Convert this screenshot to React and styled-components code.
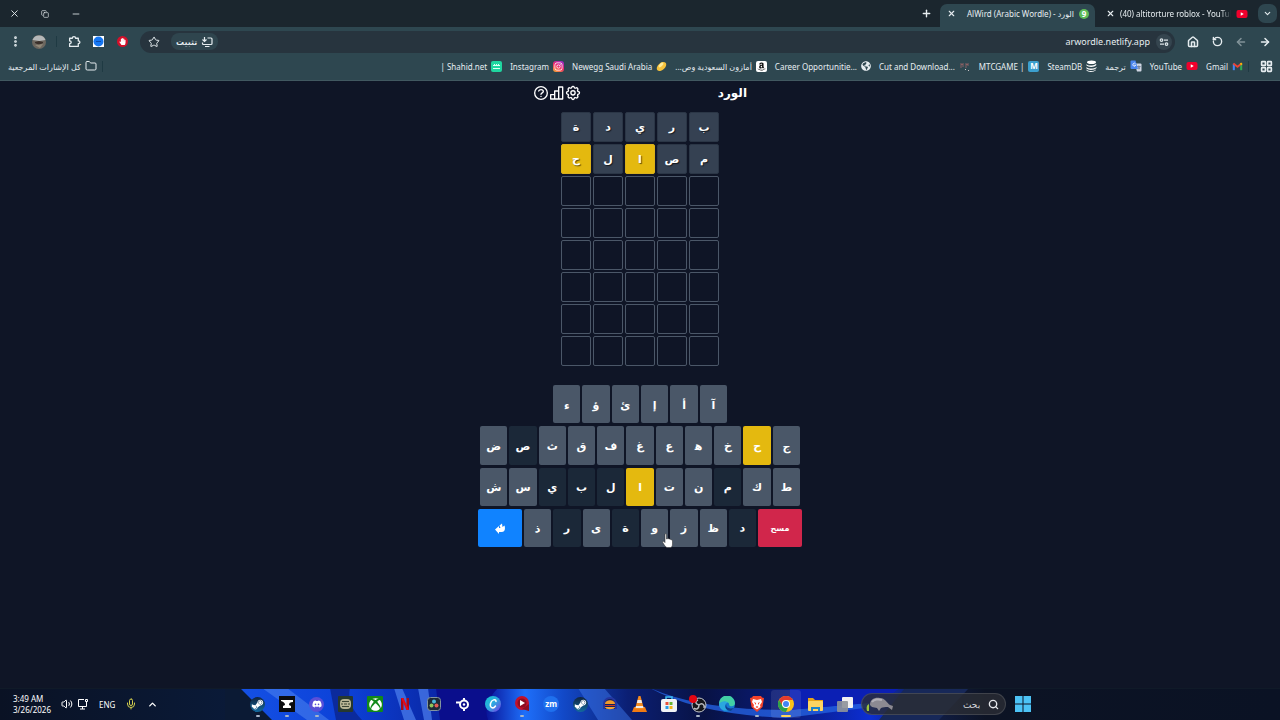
import React from 'react';
import styled, { createGlobalStyle } from 'styled-components';
import {
  ArrowLeft,
  ArrowRight,
  ChevronDown,
  ChevronUp,
  Copy,
  EllipsisVertical,
  Folder,
  House,
  LayoutGrid,
  Mic,
  Minus,
  Plus,
  RotateCcw,
  Search,
  Star,
  Volume2,
  X,
} from 'lucide-react';
import {
  FaAmazon,
  FaDiscord,
  FaGlobeAmericas,
  FaInstagram,
  FaSteamSymbol,
  FaXbox,
  FaHandPaper,
} from 'react-icons/fa';

const GlobalStyle = createGlobalStyle`
  * {
    box-sizing: border-box;
  }
  body {
    margin: 0;
    background: #0f1526;
    color: #e6edf0;
    font-family: 'Noto Sans', 'Open Sans', 'DejaVu Sans', sans-serif;
    font-size: 8px;
  }
  button,
  input {
    margin: 0;
    padding: 0;
    border: 0;
    background: none;
    color: inherit;
    font: inherit;
  }
  a {
    color: inherit;
    text-decoration: none;
  }
  svg {
    display: block;
    flex-shrink: 0;
  }
`;

const Screen = styled.div`
  display: flex;
  flex-direction: column;
  min-height: 100vh;
`;

/* browser */
const TabStrip = styled.div`
  display: flex;
  align-items: center;
  gap: 4px;
  height: 27px;
  padding-right: 3px;
  background: #1b262e;
`;
const TabMenu = styled.button`
  display: grid;
  place-items: center;
  width: 19px;
  height: 19px;
  border-radius: 7px;
  background: #2e464f;
`;
const Tab = styled.div`
  display: flex;
  align-items: center;
  gap: 5px;
  align-self: flex-end;
  width: 155px;
  height: 23px;
  padding: 0 6px 4px;
  border-radius: 7px 7px 0 0;
  background: ${p => (p.$active ? '#2e4750' : 'transparent')};
`;
const TabTitle = styled.button`
  flex: 1;
  min-width: 0;
  direction: ltr;
  text-align: ${p => (p.$fade ? 'left' : 'right')};
  white-space: nowrap;
  mask-image: ${p =>
    p.$fade ? 'linear-gradient(to left, transparent, #000 10px)' : 'none'};
`;
const IconButton = styled.button`
  display: grid;
  place-items: center;
  flex-shrink: 0;
  width: ${p => p.$width || 24}px;
  height: 20px;
  opacity: ${p => (p.$dim ? 0.45 : 1)};
`;
const CloseButton = styled.button`
  display: grid;
  place-items: center;
  width: 10px;
  height: 12px;
`;
const WindowControls = styled.div`
  display: flex;
  margin-right: auto;
`;
const Toolbar = styled.div`
  display: flex;
  align-items: center;
  height: 30px;
  padding: 0 3px 1px;
  background: #2e4750;
`;
const Omnibox = styled.div`
  display: flex;
  flex: 1;
  align-items: center;
  gap: 6px;
  height: 22px;
  margin: 0 6px;
  padding: 0 3px;
  border-radius: 11px;
  background: #27343e;
`;
const SiteInfo = styled.button`
  display: grid;
  place-items: center;
  width: 16px;
  height: 16px;
  border-radius: 8px;
  background: #35454f;
`;
const Address = styled.input`
  flex: 1;
  direction: ltr;
  text-align: right;
  font-size: 9px;
  outline: none;
`;
const InstallButton = styled.button`
  display: flex;
  align-items: center;
  gap: 4px;
  height: 17px;
  padding: 0 5px;
  border-radius: 8px;
  background: #2f454e;
  font-weight: 600;
`;
const Divider = styled.span`
  width: 1px;
  height: 11px;
  margin: 0 5px;
  background: #1f3a43;
`;
const BookmarksBar = styled.nav`
  display: flex;
  align-items: center;
  height: 24px;
  padding: 0 2px 5px 8px;
  border-bottom: 1px solid #415860;
  background: #2e4750;
  white-space: nowrap;
`;
const BookmarkList = styled.div`
  display: flex;
  flex: 1;
  gap: 8px;
`;
const Bookmark = styled.a`
  display: flex;
  align-items: center;
  gap: 4px;
`;
const Badge = styled.span`
  display: grid;
  place-items: center;
  flex-shrink: 0;
  width: ${p => p.$size || 11}px;
  height: ${p => p.$size || 11}px;
  border-radius: ${p => p.$radius ?? 2}px;
  background: ${p => p.$bg || 'transparent'};
  color: ${p => p.$color || '#fff'};
  font-size: 8px;
  font-weight: 700;
  line-height: 1;
`;

/* game */
const Game = styled.main`
  display: flex;
  flex: 1;
  flex-direction: column;
  align-items: center;
  padding-top: 2px;
  font-family: 'DejaVu Sans', sans-serif;
  font-weight: 700;
  color: #fff;
`;
const GameHeader = styled.header`
  display: flex;
  align-items: center;
  justify-content: space-between;
  width: 214px;
  height: 20px;
`;
const GameTitle = styled.h1`
  margin: 0;
  font-size: 12px;
  line-height: 20px;
`;
const GameActions = styled.div`
  display: flex;
  button {
    width: 16px;
    height: 16px;
  }
`;
const Board = styled.div`
  display: grid;
  grid-template-columns: repeat(5, 30px);
  grid-auto-rows: 30px;
  gap: 2px;
  margin-top: 9px;
`;
const tileColors = { absent: '#354152', present: '#e4b90f' };
const Tile = styled.div`
  display: grid;
  place-items: center;
  border: 1px solid ${p => (p.$state ? '#2b3646' : '#4b5768')};
  border-radius: 2px;
  background: ${p => tileColors[p.$state] || 'transparent'};
  border-color: ${p => p.$state === 'present' && '#d9b01a'};
  font-size: 11px;
  text-shadow: 1px 1px 1px #0009;
`;
const Keyboard = styled.div`
  position: relative;
  display: grid;
  grid-auto-rows: 1fr;
  justify-items: center;
  gap: 3px;
  height: 162px;
  margin-top: 19px;
`;
const KeyRow = styled.div`
  display: flex;
  gap: 2px;
  width: ${p => p.$width}px;
`;
const keyColors = {
  idle: '#4a5768',
  absent: '#1b2838',
  present: '#e4b90f',
  enter: '#1083ff',
  erase: '#d1264b',
};
const Key = styled.button`
  display: grid;
  place-items: center;
  flex: ${p => (p.$wide ? '0 0 44px' : '1')};
  padding-top: 2px;
  border-radius: 2px;
  background: ${p => keyColors[p.$state]};
  font-size: ${p => (p.$wide ? 8 : 11)}px;
  font-weight: 700;
`;
const Pointer = styled.svg`
  position: absolute;
  left: 184px;
  top: 148px;
`;

/* taskbar */
const Taskbar = styled.footer`
  position: relative;
  display: flex;
  align-items: center;
  height: 32px;
  overflow: hidden;
  background: #0a1224;
`;
const Wallpaper = styled.svg`
  position: absolute;
  inset: 0;
  width: 100%;
  height: 100%;
`;
const Tray = styled.div`
  position: relative;
  display: flex;
  align-items: center;
  gap: 10px;
  width: 19%;
  padding-left: 13px;
  color: #fff;
`;
const Clock = styled.time`
  line-height: 11px;
`;
const TrayGroup = styled.span`
  display: flex;
  gap: 4px;
`;
const Apps = styled.div`
  position: relative;
  display: grid;
  grid-template-columns: repeat(21, 1fr);
  width: 616px;
`;
const AppButton = styled.button`
  position: relative;
  display: grid;
  place-items: center;
  height: 28px;
  border-radius: 3px;
  background: ${p => (p.$active ? '#ffffff18' : 'transparent')};
  &::after {
    content: '';
    position: absolute;
    bottom: 1px;
    width: ${p => (p.$active ? 10 : 4)}px;
    height: 2px;
    border-radius: 1px;
    background: ${p =>
      p.$active ? '#ffd65a' : p.$open ? '#a9b6c8' : 'transparent'};
  }
`;
const StartArea = styled.div`
  position: relative;
  display: flex;
  flex: 1;
  align-items: center;
  gap: 9px;
  padding-left: 2px;
`;
const SearchBox = styled.label`
  display: flex;
  align-items: center;
  gap: 8px;
  width: 145px;
  height: 22px;
  padding: 0 6px 0 4px;
  border: 1px solid #ffffff20;
  border-radius: 11px;
  background: #2a2d34cc;
  input {
    flex: 1;
    min-width: 0;
    font-size: 9px;
    outline: none;
  }
  input::placeholder {
    color: #d4d7dc;
    opacity: 1;
  }
`;

const YouTubeIcon = () => (
  <svg width="12" height="12" viewBox="0 0 24 24">
    <rect x="1" y="4" width="22" height="16" rx="4" fill="#f0002c" />
    <path d="M9.5 8.5v7l6-3.5z" fill="#fff" />
  </svg>
);
const GmailIcon = () => (
  <svg width="11" height="11" viewBox="0 0 24 24" fill="none" strokeWidth="4.5">
    <path d="M4 20V6" stroke="#4285f4" />
    <path d="M20 20V6" stroke="#34a853" />
    <path d="M3 5.5l9 7 9-7" stroke="#ea4335" />
    <path d="M18.5 7.5L21.5 5" stroke="#fbbc04" />
  </svg>
);
const TranslateIcon = () => (
  <svg width="12" height="12" viewBox="0 0 24 24">
    <path d="M9 7h12a2 2 0 012 2v12a2 2 0 01-2 2h-7z" fill="#cfd6e2" />
    <path
      d="M14 13h7M17.500 11v2M20 13c-1 3-2 4-4 5M16 14c1 2 2 3 4 4"
      stroke="#5c6b88"
      strokeWidth="1.400"
      fill="none"
    />
    <path d="M3 1h8l5 17H3a2 2 0 01-2-2V3a2 2 0 012-2z" fill="#4b86f0" />
    <path
      d="M11 7.500a3 3 0 10.500 3H8.500"
      stroke="#fff"
      strokeWidth="1.600"
      fill="none"
    />
  </svg>
);
const SteamDbIcon = () => (
  <svg width="11" height="12" viewBox="0 0 22 24" fill="#fff">
    <ellipse cx="11" cy="4.500" rx="9" ry="3.500" />
    <path d="M1 8c2 4 13 4 19 0l1 2c-4 5-16 5-20 1zM1 14c4 4 15 4 20 0v2c-4 5-17 5-20 1zM1 19c4 4 14 4 19 0v1c-4 5-16 5-19 1z" />
  </svg>
);
const PixelIcon = () => (
  <svg width="12" height="11" viewBox="0 0 12 11">
    <path d="M1 2h4v4H3v1H1zM6 2h4v3H8v2H6z" fill="#59535a" />
    <path d="M2 3h2v1H2zM7 3h2v1H7z" fill="#8c5f62" />
    <path d="M6 8h1v1H6zM9 9h1v1H9z" fill="#c9c4c8" />
  </svg>
);
const EggIcon = () => (
  <svg width="11" height="11" viewBox="0 0 22 22">
    <ellipse cx="11" cy="11" rx="11" ry="7" fill="#f5c23c" transform="rotate(-42 11 11)" />
    <ellipse cx="10" cy="8" rx="6" ry="3" fill="#ffeb9a" transform="rotate(-42 10 8)" />
  </svg>
);
const TuneIcon = () => (
  <svg width="10" height="10" viewBox="0 0 20 20" fill="none" stroke="#dbe4e8" strokeWidth="2.500">
    <circle cx="5" cy="6" r="2.500" />
    <path d="M10 6h8M2 14h8" />
    <circle cx="15" cy="14" r="2.500" />
  </svg>
);
const InstallIcon = () => (
  <svg width="12" height="12" viewBox="0 0 24 24" fill="none" stroke="currentColor" strokeWidth="2.400">
    <path d="M13 4h7a2 2 0 012 2v9a2 2 0 01-2 2H5a2 2 0 01-2-2v-2M8 21h9" />
    <path d="M7 2v8M3 7l4 4 4-4" />
  </svg>
);
const ExtensionsIcon = () => (
  <svg width="13" height="13" viewBox="0 0 24 24" fill="none" stroke="currentColor" strokeWidth="2.400" strokeLinejoin="round">
    <path d="M3 6h5c0-4 6-4 6 0h5v5c4 0 4 5 0 5v5H3v-5c4 0 4-5 0-5z" />
  </svg>
);
const AvatarIcon = () => (
  <svg width="14" height="14" viewBox="0 0 14 14">
    <circle cx="7" cy="7" r="7" fill="#6c675f" />
    <path d="M.5 5a7 7 0 0113 0l-6 1z" fill="#b5b8b9" />
    <path d="M3 7l4-1 4 1v1l-4 2-4-2z" fill="#3a302b" />
    <path d="M3 10l8-1-3 4z" fill="#918878" />
  </svg>
);
const HelpIcon = () => (
  <svg width="16" height="16" viewBox="0 0 24 24" fill="none" stroke="#fff" strokeWidth="2" strokeLinecap="round">
    <circle cx="12" cy="12" r="9.500" />
    <path d="M8.500 9c.6-1.400 2-2 3.500-2 2 0 3.500 1.200 3.500 2.800 0 2-3.500 2-3.500 4.200M12 17v.1" />
  </svg>
);
const StatsIcon = () => (
  <svg width="16" height="16" viewBox="0 0 24 24" fill="none" stroke="#fff" strokeWidth="2" strokeLinejoin="round">
    <path d="M2.500 14.500h6V21h-6zM8.500 9h6v12h-6zM14.500 3h6v18h-6z" />
  </svg>
);
const GearIcon = () => (
  <svg width="16" height="16" viewBox="0 0 24 24" fill="none" stroke="#fff" strokeWidth="2" strokeLinejoin="round">
    <path d="M10.300 3.300c.4-1.800 3-1.800 3.400 0a1.800 1.800 0 002.800 1.100c1.500-1 3.600 1 2.700 2.700a1.800 1.800 0 001.200 2.900c1.800.4 1.800 3.200 0 3.600a1.800 1.800 0 00-1.200 2.900c.9 1.500-1.200 3.600-2.700 2.700a1.800 1.800 0 00-2.800 1.200c-.4 1.800-3 1.800-3.400 0a1.800 1.800 0 00-2.800-1.200c-1.500.9-3.600-1.200-2.700-2.700a1.800 1.800 0 00-1.200-2.900c-1.800-.4-1.800-3.200 0-3.600a1.800 1.800 0 001.200-2.900c-.9-1.700 1.200-3.700 2.700-2.700a1.800 1.800 0 002.800-1.100z" />
    <circle cx="12" cy="11.800" r="3.200" />
  </svg>
);
const EnterIcon = () => (
  <svg width="10" height="11" viewBox="0 0 20 22" fill="#fff">
    <path d="M0 13l8-7v4h3L9 5l5-4 1 7 4-3c2 6 1 13-6 13H8v4z" />
  </svg>
);
const SteamIcon = () => (
  <Badge $size={15} $radius={8} $bg="linear-gradient(#10243f, #136a9e)">
    <FaSteamSymbol size={13} />
  </Badge>
);

const bookmarks = [
  { text: 'Gmail', icon: <GmailIcon /> },
  { text: 'YouTube', icon: <YouTubeIcon /> },
  { text: 'ترجمة', icon: <TranslateIcon /> },
  { text: 'SteamDB', icon: <SteamDbIcon /> },
  { text: 'MTCGAME |', icon: <Badge $bg="#3c9fce">M</Badge> },
  { text: 'Cut and Download...', icon: <PixelIcon /> },
  { text: 'Career Opportunitie...', icon: <FaGlobeAmericas size={10} /> },
  {
    text: 'أمازون السعودية وص...',
    rtl: true,
    icon: (
      <Badge $bg="#fff" $color="#111">
        <FaAmazon size={9} />
      </Badge>
    ),
  },
  { text: 'Newegg Saudi Arabia', icon: <EggIcon /> },
  {
    text: 'Instagram',
    icon: (
      <Badge $radius={3} $bg="linear-gradient(210deg, #8a2bd8, #ee2a6b 50%, #fdb52f)">
        <FaInstagram size={9} />
      </Badge>
    ),
  },
  {
    text: '| Shahid.net',
    icon: (
      <Badge $bg="#1fd6a0">
        <svg width="7" height="7" viewBox="0 0 7 7" stroke="#d9fff3">
          <path d="M0 2.500h7M0 5.500h7M1.500 1v2M3.500 1v2M5.500 1v2" />
        </svg>
      </Badge>
    ),
  },
];

const guesses = [
  ['ب', 'ر', 'ي', 'د', 'ة'],
  ['م', 'ص', 'ا', 'ل', 'ح'],
];
const boardRows = 8;
const present = 'اح';
const absent = 'بريدةمصل';

// the joiner gives heh its initial shape
const keyRows = [
  { width: 174, keys: 'آ أ إ ئ ؤ ء' },
  { width: 320, keys: 'ج ح خ ه\u200d ع غ ف ق ث ص ض' },
  { width: 320, keys: 'ط ك م ن ت ا ل ب ي س ش' },
  { width: 324, keys: 'د ظ ز و ة ى ر ذ', actions: true },
];

const letterState = (letter, other) => {
  if (present.includes(letter)) return 'present';
  return absent.includes(letter) ? 'absent' : other;
};

const apps = [
  { name: 'Steam', open: true, icon: <SteamIcon /> },
  {
    name: 'Anvil',
    open: true,
    icon: (
      <svg width="16" height="16" viewBox="0 0 16 16">
        <rect width="16" height="16" fill="#0b0c0f" />
        <path d="M2 4h12v2c-3 0-4 1-4 3l2 1v2H4v-2l2-1c0-2-1-3-4-4z" fill="#fff" />
      </svg>
    ),
  },
  {
    name: 'Discord',
    open: true,
    icon: (
      <Badge $size={15} $radius={8} $bg="#5a4fd8">
        <FaDiscord size={10} />
      </Badge>
    ),
  },
  {
    name: 'Game',
    icon: (
      <svg width="15" height="16" viewBox="0 0 15 16">
        <rect width="15" height="16" rx="1" fill="#26382f" />
        <rect x="2" y="3" width="11" height="10" rx="4" fill="#b6b493" />
        <path d="M4 5.500h7M3 8h2M6 8h3M10 8h2M4 10.500h7" stroke="#3a4633" />
      </svg>
    ),
  },
  {
    name: 'Xbox',
    icon: (
      <Badge $size={16} $radius={1} $bg="#128a19">
        <FaXbox size={13} />
      </Badge>
    ),
  },
  {
    name: 'Netflix',
    icon: (
      <svg width="8" height="12" viewBox="0 0 8 12">
        <path d="M0 0h2.500v12H0zM5.500 0H8v12H5.500z" fill="#a90712" />
        <path d="M0 0h2.500L8 12H5.500z" fill="#e50914" />
      </svg>
    ),
  },
  {
    name: 'Resolve',
    icon: (
      <svg width="14" height="14" viewBox="0 0 14 14">
        <rect x=".5" y=".5" width="13" height="13" rx="3" fill="#1e2a36" stroke="#8295a0" />
        <circle cx="7" cy="4.500" r="2" fill="#4bb7d8" />
        <circle cx="4.500" cy="8.500" r="2" fill="#8fc45b" />
        <circle cx="9.500" cy="8.500" r="2" fill="#e25b54" />
      </svg>
    ),
  },
  {
    name: 'SteelSeries',
    icon: (
      <svg width="14" height="14" viewBox="0 0 14 14" fill="none" stroke="#fff" strokeWidth="2">
        <circle cx="8" cy="7.500" r="4" />
        <circle cx="8" cy="7.500" r="1.200" fill="#fff" stroke="none" />
        <path d="M8 1v3M8 11v3M0 5.500h4" />
      </svg>
    ),
  },
  {
    name: 'Canva',
    icon: (
      <svg width="16" height="16" viewBox="0 0 16 16">
        <defs>
          <linearGradient id="canva" x2="1" y2="1">
            <stop stopColor="#12c6d2" />
            <stop offset=".5" stopColor="#2fa8e0" />
            <stop offset="1" stopColor="#7b33e6" />
          </linearGradient>
        </defs>
        <circle cx="8" cy="8" r="8" fill="url(#canva)" />
        <path
          d="M11 5.500c0-3-4.500-2-5.500 2s2.500 6 5 2.500"
          fill="none"
          stroke="#fff"
          strokeWidth="1.500"
          strokeLinecap="round"
        />
      </svg>
    ),
  },
  {
    name: 'Video',
    open: true,
    icon: (
      <svg width="16" height="16" viewBox="0 0 16 16">
        <circle cx="8" cy="7" r="7" fill="#c3122c" />
        <path d="M8 13l7-5v7z" fill="#8d0e22" />
        <circle cx="8" cy="7" r="4.500" fill="#8d0e22" />
        <path d="M6 4v6l5-3z" fill="#fff" />
      </svg>
    ),
  },
  {
    name: 'Zoom',
    icon: (
      <Badge $size={16} $radius={8} $bg="#1f70ee">
        zm
      </Badge>
    ),
  },
  { name: 'Steam', icon: <SteamIcon /> },
  {
    name: 'Burger',
    icon: (
      <svg width="16" height="14" viewBox="0 0 16 14">
        <path d="M2 12V7a6 6 0 0112 0v5" fill="#14205e" stroke="#2536a0" strokeWidth="2" />
        <path d="M3 7c0-5 10-5 10 0z" fill="#f09a2c" />
        <path d="M3 8h10v1H3z" fill="#c7372b" />
        <path d="M3 10h10c0 3-10 3-10 0z" fill="#f2a43a" />
      </svg>
    ),
  },
  {
    name: 'VLC',
    icon: (
      <svg width="15" height="16" viewBox="0 0 15 16">
        <path d="M2 11h11l2 5H0z" fill="#f07a13" />
        <path d="M6.500 0h2L12 13H3z" fill="#f58a1f" />
        <path d="M5.600 4h3.800l.7 3H4.900zM4 10h7l.5 2h-8z" fill="#f3ede6" />
      </svg>
    ),
  },
  {
    name: 'Store',
    icon: (
      <svg width="16" height="16" viewBox="0 0 16 16">
        <path d="M5 4V1h6v3" fill="none" stroke="#3dbdf4" strokeWidth="1.500" />
        <rect y="3" width="16" height="13" rx="2" fill="#f1f3f6" />
        <path d="M4.500 6h3v3h-3z" fill="#e8513b" />
        <path d="M8.500 6h3v3h-3z" fill="#6ab535" />
        <path d="M4.500 10h3v3h-3z" fill="#2b9ce6" />
        <path d="M8.500 10h3v3h-3z" fill="#f6b61d" />
      </svg>
    ),
  },
  {
    name: 'OBS',
    open: true,
    icon: (
      <svg width="20" height="18" viewBox="0 0 20 18">
        <circle cx="11" cy="10" r="7" fill="#16171b" stroke="#c7c9ce" />
        <path
          d="M11 10c-4-1-4-4-1-5M11 10c0 4-3 5-5 3M11 10c3-3 6 0 5 3"
          fill="none"
          stroke="#b9bbc0"
          strokeWidth="1.500"
        />
        <circle cx="5" cy="4" r="4" fill="#e30613" />
      </svg>
    ),
  },
  {
    name: 'Edge',
    icon: (
      <svg width="16" height="16" viewBox="0 0 16 16">
        <circle cx="8" cy="8" r="8" fill="#1679d2" />
        <path d="M0 8a8 8 0 0116-1c0 4-5 4-6 2 1-3-5-5-10-1z" fill="#42cfa5" />
        <path d="M0 8c3-4 8-3 9-1-4 0-4 5 0 7-5 2-9-2-9-6z" fill="#2aa7df" />
        <path d="M9 7c-4 2-1 7 6 5l-3 3c-5 0-8-5-3-8z" fill="#103f91" />
      </svg>
    ),
  },
  {
    name: 'Brave',
    open: true,
    icon: (
      <svg width="14" height="16" viewBox="0 0 14 16">
        <path d="M3 0h8l1 1.500 2 .5-1.500 9L7 16l-5.500-5L0 2l2-.500z" fill="#f4432b" />
        <path d="M3 3l4 1 4-1 1 3-2 3 .5 2L7 13.500 3.500 11 4 9 2 6z" fill="#fff" />
        <path d="M4 6l2 1v2zM10 6L8 7v2zM5.500 11L7 10l1.500 1L7 12z" fill="#f4432b" />
      </svg>
    ),
  },
  {
    name: 'Chrome',
    active: true,
    icon: (
      <svg width="16" height="16" viewBox="0 0 16 16">
        <circle cx="8" cy="8" r="8" fill="#fbc116" />
        <path d="M1.070 4A8 8 0 0114.930 4H8a4 4 0 00-3.460 6z" fill="#e33b2e" />
        <path d="M1.070 4l3.470 6A4 4 0 008 12l2-.5L8 16A8 8 0 011.070 4z" fill="#2ba24c" />
        <circle cx="8" cy="8" r="4" fill="#fff" />
        <circle cx="8" cy="8" r="3" fill="#4285f4" />
      </svg>
    ),
  },
  {
    name: 'Files',
    icon: (
      <svg width="17" height="15" viewBox="0 0 17 15">
        <path d="M1 1h5l2 2h8v5H1z" fill="#e8a317" />
        <rect x="1" y="4" width="15" height="10" rx="1" fill="#fdd462" />
        <path d="M4 14v-4h9v4h-2v-2H6v2z" fill="#1c83cc" />
      </svg>
    ),
  },
  {
    name: 'Task view',
    icon: (
      <svg width="16" height="15" viewBox="0 0 16 15">
        <rect x="5" width="11" height="11" rx="1" fill="#f1f1f1" />
        <rect y="4" width="11" height="11" rx="1" fill="#8e9299" opacity=".9" />
      </svg>
    ),
  },
];

const Browser = () => (
  <header dir="rtl">
    <TabStrip>
      <TabMenu aria-label="Search tabs">
        <ChevronDown size={9} strokeWidth={3} />
      </TabMenu>
      <Tab>
        <YouTubeIcon />
        <TabTitle $fade>(40) altitorture roblox - YouTub</TabTitle>
        <CloseButton aria-label="Close tab">
          <X size={9} strokeWidth={3} />
        </CloseButton>
      </Tab>
      <Tab $active>
        <Badge $size={10} $radius={5} $bg="#5dbb57">
          9
        </Badge>
        <TabTitle>AlWird (Arabic Wordle) - الورد</TabTitle>
        <CloseButton aria-label="Close tab">
          <X size={9} strokeWidth={3} />
        </CloseButton>
      </Tab>
      <IconButton $width={20} aria-label="New tab">
        <Plus size={11} strokeWidth={3} />
      </IconButton>
      <WindowControls>
        <IconButton $width={31} aria-label="Minimize">
          <Minus size={10} />
        </IconButton>
        <IconButton $width={31} aria-label="Restore">
          <Copy size={8} />
        </IconButton>
        <IconButton $width={29} aria-label="Close">
          <X size={11} />
        </IconButton>
      </WindowControls>
    </TabStrip>
    <Toolbar>
      <IconButton aria-label="Forward">
        <ArrowRight size={12} strokeWidth={3} />
      </IconButton>
      <IconButton $dim aria-label="Back">
        <ArrowLeft size={12} strokeWidth={3} />
      </IconButton>
      <IconButton aria-label="Reload">
        <RotateCcw size={11} strokeWidth={3} />
      </IconButton>
      <IconButton aria-label="Home">
        <House size={12} strokeWidth={3} />
      </IconButton>
      <Omnibox>
        <SiteInfo aria-label="Site information">
          <TuneIcon />
        </SiteInfo>
        <Address aria-label="Address" defaultValue="arwordle.netlify.app" />
        <InstallButton>
          <InstallIcon />
          تثبيت
        </InstallButton>
        <IconButton $width={22} aria-label="Bookmark this page">
          <Star size={12} />
        </IconButton>
      </Omnibox>
      <IconButton aria-label="Ad blocker">
        <Badge $radius={6} $bg="#d4102a">
          <FaHandPaper size={7} />
        </Badge>
      </IconButton>
      <IconButton aria-label="Extension">
        <svg width="11" height="11" viewBox="0 0 11 11">
          <rect width="11" height="11" fill="#fff" />
          <circle cx="5.500" cy="5.500" r="5" fill="#1677f2" />
          <path d="M3 5.500h5" stroke="#0d4fb0" />
        </svg>
      </IconButton>
      <IconButton aria-label="Extensions">
        <ExtensionsIcon />
      </IconButton>
      <Divider />
      <IconButton aria-label="Profile">
        <AvatarIcon />
      </IconButton>
      <IconButton aria-label="Menu">
        <EllipsisVertical size={13} strokeWidth={3} />
      </IconButton>
    </Toolbar>
    <BookmarksBar>
      <IconButton aria-label="Apps">
        <LayoutGrid size={13} strokeWidth={3} />
      </IconButton>
      <Divider />
      <BookmarkList>
        {bookmarks.map(b => (
          <Bookmark key={b.text} href="#">
            {b.icon}
            <span dir={b.rtl ? 'rtl' : 'ltr'}>{b.text}</span>
          </Bookmark>
        ))}
      </BookmarkList>
      <Divider />
      <Bookmark href="#">
        <Folder size={12} />
        كل الإشارات المرجعية
      </Bookmark>
    </BookmarksBar>
  </header>
);

const Letters = () => {
  const empty = Array(5 * (boardRows - guesses.length)).fill('');

  return (
    <Board dir="rtl">
      {[...guesses.flat(), ...empty].map((letter, i) => (
        <Tile key={i} $state={letter && letterState(letter)}>
          {letter}
        </Tile>
      ))}
    </Board>
  );
};

const Keys = () => (
  <Keyboard dir="rtl">
    {keyRows.map(row => (
      <KeyRow key={row.keys} $width={row.width}>
        {row.actions && (
          <Key $wide $state="erase">
            مسح
          </Key>
        )}
        {row.keys.split(' ').map(letter => (
          <Key key={letter} $state={letterState(letter, 'idle')}>
            {letter}
          </Key>
        ))}
        {row.actions && (
          <Key $wide $state="enter" aria-label="Enter">
            <EnterIcon />
          </Key>
        )}
      </KeyRow>
    ))}
    <Pointer width="11" height="15" viewBox="0 0 22 30">
      <path
        d="M6 2c2-1 3 0 3 2v8l3-1 3 1 3 1 3 2v7c0 4-2 7-4 7h-7c-3 0-5-5-8-9-2-3 0-5 3-2l1 1V4z"
        fill="#fff"
        stroke="#222"
      />
    </Pointer>
  </Keyboard>
);

const Desktop = () => (
  <Wallpaper viewBox="0 0 1280 32" preserveAspectRatio="none">
    <defs>
      <linearGradient id="wall">
        <stop offset="0" stopColor="#0a1224" />
        <stop offset=".18" stopColor="#0a1a38" />
        <stop offset=".19" stopColor="#1450e4" />
        <stop offset=".27" stopColor="#0c41d8" />
        <stop offset=".33" stopColor="#0a2cae" />
        <stop offset=".38" stopColor="#0a159a" />
        <stop offset=".41" stopColor="#1e6ffa" />
        <stop offset=".44" stopColor="#1249c8" />
        <stop offset=".49" stopColor="#0b1f74" />
        <stop offset=".55" stopColor="#081244" />
        <stop offset=".62" stopColor="#0a1c80" />
        <stop offset=".68" stopColor="#0b2ed4" />
        <stop offset=".72" stopColor="#12204e" />
        <stop offset=".77" stopColor="#0c1324" />
        <stop offset="1" stopColor="#0a1224" />
      </linearGradient>
    </defs>
    <path d="M0 0h1280v32H0z" fill="url(#wall)" />
    <path d="M225 0h15l32 32h-47z" fill="#0b1a34" />
    <path d="M262 0h25l42 32h-22z" fill="#5389ef" opacity=".5" />
    <path d="M330 0h20q-4 16 12 32h-26z" fill="#0b2a9c" />
    <path d="M394 0h8l14 32h-12zM418 0h10l4 32h-8z" fill="#4d80ee" opacity=".7" />
    <path d="M436 0h62q-16 16-10 32h-48z" fill="#0a0e8c" />
    <path d="M578 0h26l28 32h-34z" fill="#3b75ea" opacity=".5" />
    <path d="M650 0q50 22 136 22l94-8v4l-94 12q-90-4-136-30z" fill="#2460e0" opacity=".8" />
    <path d="M790 0h110l-20 14-90 8z" fill="#0b1fb4" />
    <path d="M905 0h64l-30 32h-60z" fill="#172858" />
    <path d="M0 0h1280v1H0z" fill="#101a28" />
  </Wallpaper>
);

const SystemBar = () => (
  <Taskbar>
    <Desktop />
    <Tray>
      <Clock>
        3:49 AM
        <br />
        3/26/2026
      </Clock>
      <TrayGroup>
        <Volume2 size={12} />
        <svg width="12" height="12" viewBox="0 0 12 12" fill="none" stroke="#fff">
          <path d="M7 1.500H1.500v7h8V6M3 11h5M5.500 8.500V11" />
          <path d="M8.500 1.500h2v2h-2zM9.500 4v2" />
        </svg>
      </TrayGroup>
      <span>ENG</span>
      <Mic size={12} color="#d4cf4e" />
      <ChevronUp size={11} strokeWidth={3} />
    </Tray>
    <Apps>
      {apps.map((app, i) => (
        <AppButton key={i} $open={app.open} $active={app.active} aria-label={app.name}>
          {app.icon}
        </AppButton>
      ))}
    </Apps>
    <StartArea>
      <SearchBox>
        <svg width="28" height="16" viewBox="0 0 28 16">
          <path d="M4 9C4 3 9 1 14 2c5 0 7 5 10 7l3 1-1 4-4-3c-3 0-5 0-7 1l-2 3-2-3-5-1z" fill="#8c8a92" />
          <path d="M6 6c2-3 7-3 10-2" stroke="#b2b0b8" strokeWidth="2" fill="none" />
          <path d="M1 15c-1-4 0-6 2-7v7z" fill="#9bc53b" />
        </svg>
        <input dir="rtl" placeholder="بحث" aria-label="Search" />
        <Search size={11} strokeWidth={3} color="#e6e8ec" />
      </SearchBox>
      <IconButton $width={16} aria-label="Start">
        <svg width="16" height="16" viewBox="0 0 16 16" fill="#4cc2f5">
          <path d="M0 0h7.500v7.500H0zM8.500 0H16v7.500H8.500zM0 8.500h7.500V16H0zM8.500 8.500H16V16H8.500z" />
        </svg>
      </IconButton>
    </StartArea>
  </Taskbar>
);

const App = () => (
  <Screen>
    <GlobalStyle />
    <Browser />
    <Game>
      <GameHeader dir="rtl">
        <GameTitle>الورد</GameTitle>
        <GameActions>
          <button aria-label="Settings">
            <GearIcon />
          </button>
          <button aria-label="Statistics">
            <StatsIcon />
          </button>
          <button aria-label="Help">
            <HelpIcon />
          </button>
        </GameActions>
      </GameHeader>
      <Letters />
      <Keys />
    </Game>
    <SystemBar />
  </Screen>
);

export default App;
